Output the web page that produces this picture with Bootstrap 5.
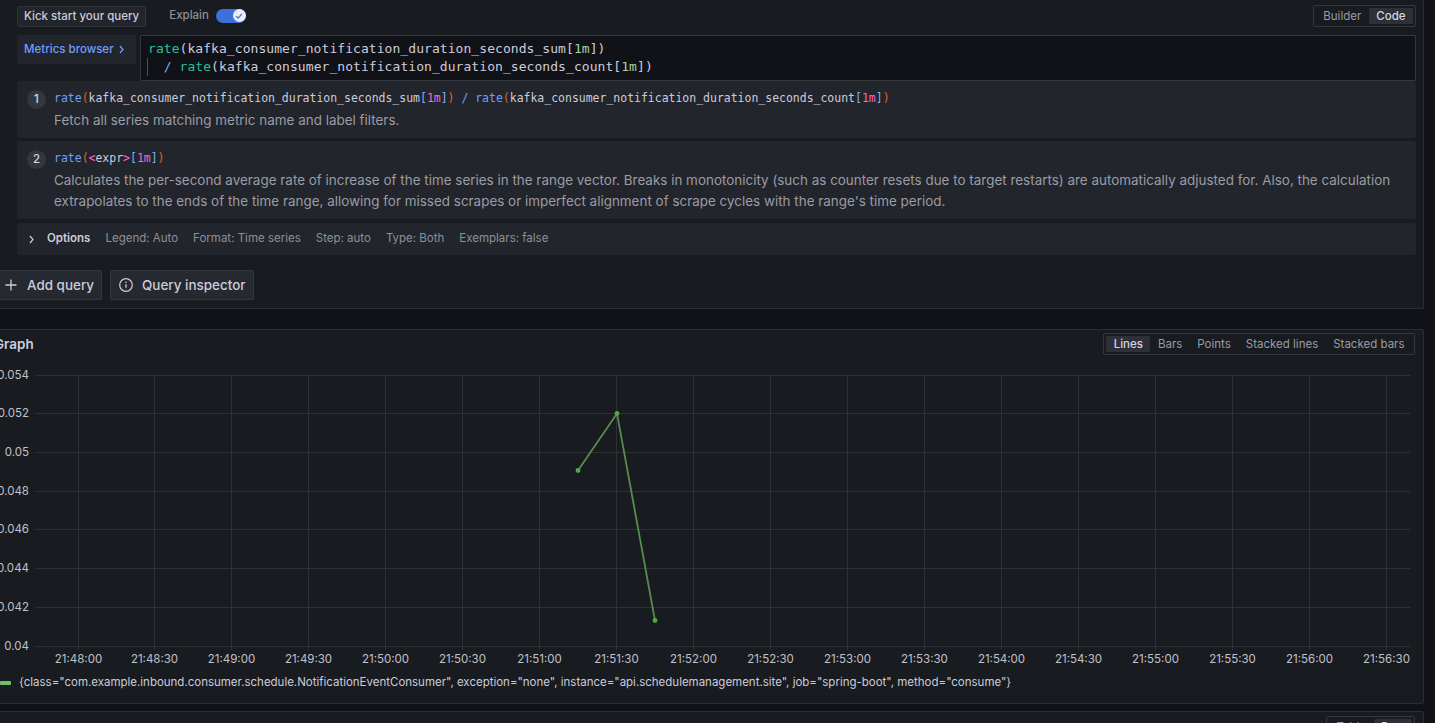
<!DOCTYPE html>
<html lang="en"><head><meta charset="utf-8"><title>Explore</title>
<link href="https://cdn.jsdelivr.net/npm/bootstrap@5.3.0/dist/css/bootstrap.min.css" rel="stylesheet">
<style>
html,body{height:100%;overflow:hidden}
body{background:#111217;color:#ccccdc;font-family:Inter,"Noto Sans",sans-serif;font-size:13.44px;line-height:1.5}
.shell{width:1431px;margin-left:-7px}
.qpanel,.gpanel,.tpanel{background:#181b1f;border:1px solid #2a2d32;border-radius:2px}
.qpanel{height:310px;margin-top:-1px;padding:6px 7px 0 23px;border-top:0}
.gpanel{height:375px;margin-top:20px;position:relative}
.tpanel{height:40px;margin-top:7px;padding:4px 8px 0 0}
.tbtn{background:#22252b;border:1px solid #2f3237;border-radius:2px;color:#ccccdc;font-weight:500;font-size:11.5px;height:21px;padding:0 6px;line-height:19px}
.explain-lbl{font-size:11.5px;color:#8e9097;font-weight:500;margin-left:23px;margin-right:7px}
.toggle{width:30px;height:14px;border-radius:7px;background:#3d71d9;position:relative;margin-top:-1px}
.knob{position:absolute;right:0;top:.5px;width:13px;height:13px;border-radius:50%;background:#e9edf7;display:flex;align-items:center;justify-content:center}
.segs{border:1px solid #34373c;border-radius:2px;padding:2px;height:22px;align-items:center;font-size:11.5px}
.seg{color:#9a9ca5;padding:0 7.5px;line-height:16px;height:16px;border-radius:2px}
.seg.on{background:#2d3036;color:#d5d5e2;font-weight:500}
.mrow{margin-top:8px;gap:4px;align-items:flex-start}
.mbtn{width:119px;height:29px;background:#22252b;color:#6e9fff;font-size:11.5px;font-weight:500;display:flex;align-items:center;padding-left:7px;gap:4px;border-radius:2px}
.editor{height:46px;flex:1;background:#111217;border:1px solid #34373c;padding:0 7px;font-family:"DejaVu Sans Mono",monospace;font-size:13px;line-height:18px;display:flex;flex-direction:column;justify-content:center;white-space:pre;border-radius:1px;letter-spacing:.06px}
.guide{display:inline-block;width:1px;height:18px;background:#4b4e55;vertical-align:top;margin-left:-1px}
.e-fn{color:#2cbf9f}.e-p{color:#ccccdc}.e-num{color:#a7d3a0}.e-op{color:#7aa7ff}
.stepbox{background:#22252b;border-radius:2px;width:1399px;display:flex;gap:8px;padding:8px 10px 0;white-space:nowrap}
.step-a{height:57px}
.step-b{height:78px;margin-top:3px}
.numdot{width:19px;height:19px;border-radius:50%;background:#33363c;color:#d5d5e2;font-size:11.5px;font-weight:500;display:flex;align-items:center;justify-content:center;flex:none;line-height:1;margin-top:1px}
.scode{font-family:"DejaVu Sans Mono",monospace;font-size:11.47px;line-height:19px;color:#ccccdc}
.s-fn{color:#6e9fff}.s-par{color:#e0622c}.s-br{color:#7fb4e8}.s-num{color:#ff66cc}.s-ang{color:#ff66cc}
.sdesc{color:#9a9ca6;font-size:13.44px;line-height:21px;margin-top:2px;white-space:normal;width:1345px}
.optbar{background:#22252b;width:1399px;height:32px;margin-top:4px;display:flex;align-items:center;font-size:11.5px;color:#8e9097;padding-left:11px;border-radius:2px}
.optbar b{color:#ccccdc;font-weight:600;margin:0 15px 0 0}
.optbar span{margin-right:15px}
.chev{margin-right:12px;flex:none}
.qact{margin-top:15px;gap:8px;margin-left:-23px;padding-left:1px}
.abtn{height:30px;background:#26292f;border:1px solid #35383e;border-radius:2px;color:#ccccdc;font-weight:500;font-size:13.44px;padding:0 7px;display:flex;align-items:center;gap:8px}
.ghead{height:27px;padding:3px 8px 0 0}
.gtitle{font-weight:600;font-size:13.44px;padding-top:1px;color:#ccccdc}
.chart{display:block;position:absolute;left:0;top:0}
.chart text{font-family:Inter,"Noto Sans",sans-serif;font-size:11.5px;fill:#c0c1cc}
.legend{position:absolute;left:6px;top:343px;font-size:11.49px;display:flex;align-items:center;gap:8px;white-space:nowrap;line-height:18px}
.swatch{width:11px;height:4px;background:#73bf69;border-radius:1px;margin-top:2px}
</style></head>
<body>
<div class="shell">
 <section class="qpanel">
  <div class="d-flex align-items-center">
   <button class="tbtn" type="button">Kick start your query</button>
   <span class="explain-lbl">Explain</span>
   <span class="toggle"><span class="knob"><svg width="8" height="8" viewBox="0 0 8 8"><path d="M1.2 4.2 3.2 6.1 6.9 1.9" fill="none" stroke="#3d71d9" stroke-width="1.3"/></svg></span></span>
   <div class="segs d-flex ms-auto"><span class="seg">Builder</span><span class="seg on">Code</span></div>
  </div>
  <div class="d-flex mrow">
   <div class="mbtn">Metrics browser <svg width="7" height="9" viewBox="0 0 7 9"><path d="M2 1 5 4.5 2 8" fill="none" stroke="#6e9fff" stroke-width="1.2"/></svg></div>
   <div class="editor"><div><span class="e-fn">rate</span><span class="e-p">(kafka_consumer_notification_duration_seconds_sum[</span><span class="e-num">1m</span><span class="e-p">])</span></div><div><span class="guide"></span>  <span class="e-op">/</span> <span class="e-fn">rate</span><span class="e-p">(kafka_consumer_notification_duration_seconds_count[</span><span class="e-num">1m</span><span class="e-p">])</span></div></div>
  </div>
  <div class="stepbox step-a">
   <span class="numdot">1</span>
   <div><div class="scode"><span class="s-fn">rate</span><span class="s-par">(</span>kafka_consumer_notification_duration_seconds_sum<span class="s-br">[</span><span class="s-num">1m</span><span class="s-br">]</span><span class="s-par">)</span> <span class="s-fn">/</span> <span class="s-fn">rate</span><span class="s-par">(</span>kafka_consumer_notification_duration_seconds_count<span class="s-br">[</span><span class="s-num">1m</span><span class="s-br">]</span><span class="s-par">)</span></div>
   <div class="sdesc">Fetch all series matching metric name and label filters.</div></div>
  </div>
  <div class="stepbox step-b">
   <span class="numdot">2</span>
   <div><div class="scode"><span class="s-fn">rate</span><span class="s-par">(</span><span class="s-ang">&lt;</span>expr<span class="s-ang">&gt;</span><span class="s-br">[</span><span class="s-num">1m</span><span class="s-br">]</span><span class="s-par">)</span></div>
   <div class="sdesc">Calculates the per-second average rate of increase of the time series in the range vector. Breaks in monotonicity (such as counter resets due to target restarts) are automatically adjusted for. Also, the calculation extrapolates to the ends of the time range, allowing for missed scrapes or imperfect alignment of scrape cycles with the range's time period.</div></div>
  </div>
  <div class="optbar">
   <svg class="chev" width="7" height="9" viewBox="0 0 7 9"><path d="M2 1 5 4.5 2 8" fill="none" stroke="#ccccdc" stroke-width="1.2"/></svg>
   <b>Options</b><span>Legend: Auto</span><span>Format: Time series</span><span>Step: auto</span><span>Type: Both</span><span>Exemplars: false</span>
  </div>
  <div class="d-flex qact">
   <button class="abtn" type="button"><svg width="16" height="16" viewBox="0 0 16 16"><path d="M8 2.5v11M2.5 8h11" stroke="#ccccdc" stroke-width="1.3" fill="none"/></svg>Add query</button>
   <button class="abtn" type="button"><svg width="16" height="16" viewBox="0 0 16 16"><circle cx="8" cy="8" r="6.3" fill="none" stroke="#ccccdc" stroke-width="1.2"/><path d="M8 7.2v3.6" stroke="#ccccdc" stroke-width="1.3"/><circle cx="8" cy="5.2" r=".8" fill="#ccccdc"/></svg>Query inspector</button>
  </div>
 </section>
 <section class="gpanel">
  <svg class="chart" width="1423" height="340" viewBox="0 0 1423 340" aria-label="Graph">
   <g id="grid" stroke="#2d3035" stroke-width="1" fill="none"></g>
   <g id="labels"></g>
   <polyline points="584,140.5 623,83.5 661,290.5" fill="none" stroke="#568c4e" stroke-width="1.8"/>
   <circle cx="584" cy="140.5" r="2.4" fill="#56a64b"/><circle cx="623" cy="83.5" r="2.4" fill="#56a64b"/><circle cx="661" cy="290.5" r="2.4" fill="#56a64b"/>
  </svg>
  <div class="ghead d-flex position-relative">
   <span class="gtitle">Graph</span>
   <div class="segs d-flex ms-auto"><span class="seg on">Lines</span><span class="seg">Bars</span><span class="seg">Points</span><span class="seg">Stacked lines</span><span class="seg">Stacked bars</span></div>
  </div>
  <div class="legend"><span class="swatch"></span><span>{class="com.example.inbound.consumer.schedule.NotificationEventConsumer", exception="none", instance="api.schedulemanagement.site", job="spring-boot", method="consume"}</span></div>
 </section>
 <section class="tpanel d-flex">
  <div class="segs d-flex ms-auto"><span class="seg">Table</span><span class="seg on">Raw</span></div>
 </section>
</div>
<script>
(function(){
 var NS='http://www.w3.org/2000/svg',g=document.getElementById('grid'),l=document.getElementById('labels');
 var ys=[45,83,122,161,199,238,277,316],yl=['0.054','0.052','0.05','0.048','0.046','0.044','0.042','0.04'];
 ys.forEach(function(y,i){
  var e=document.createElementNS(NS,'line');e.setAttribute('x1',41);e.setAttribute('x2',1416);e.setAttribute('y1',y+.5);e.setAttribute('y2',y+.5);g.appendChild(e);
  var t=document.createElementNS(NS,'text');t.setAttribute('x',35);t.setAttribute('y',y+3.5);t.setAttribute('text-anchor','end');t.textContent=yl[i];l.appendChild(t);
 });
 var tl=['21:48:00','21:48:30','21:49:00','21:49:30','21:50:00','21:50:30','21:51:00','21:51:30','21:52:00','21:52:30','21:53:00','21:53:30','21:54:00','21:54:30','21:55:00','21:55:30','21:56:00','21:56:30'];
 tl.forEach(function(s,i){
  var x=i==0?84:83+i*77;
  var e=document.createElementNS(NS,'line');e.setAttribute('x1',x+.5);e.setAttribute('x2',x+.5);e.setAttribute('y1',45);e.setAttribute('y2',320);g.appendChild(e);
  var t=document.createElementNS(NS,'text');t.setAttribute('x',x+.5);t.setAttribute('y',333);t.setAttribute('text-anchor','middle');t.textContent=s;l.appendChild(t);
 });
})();
</script>
</body></html>
